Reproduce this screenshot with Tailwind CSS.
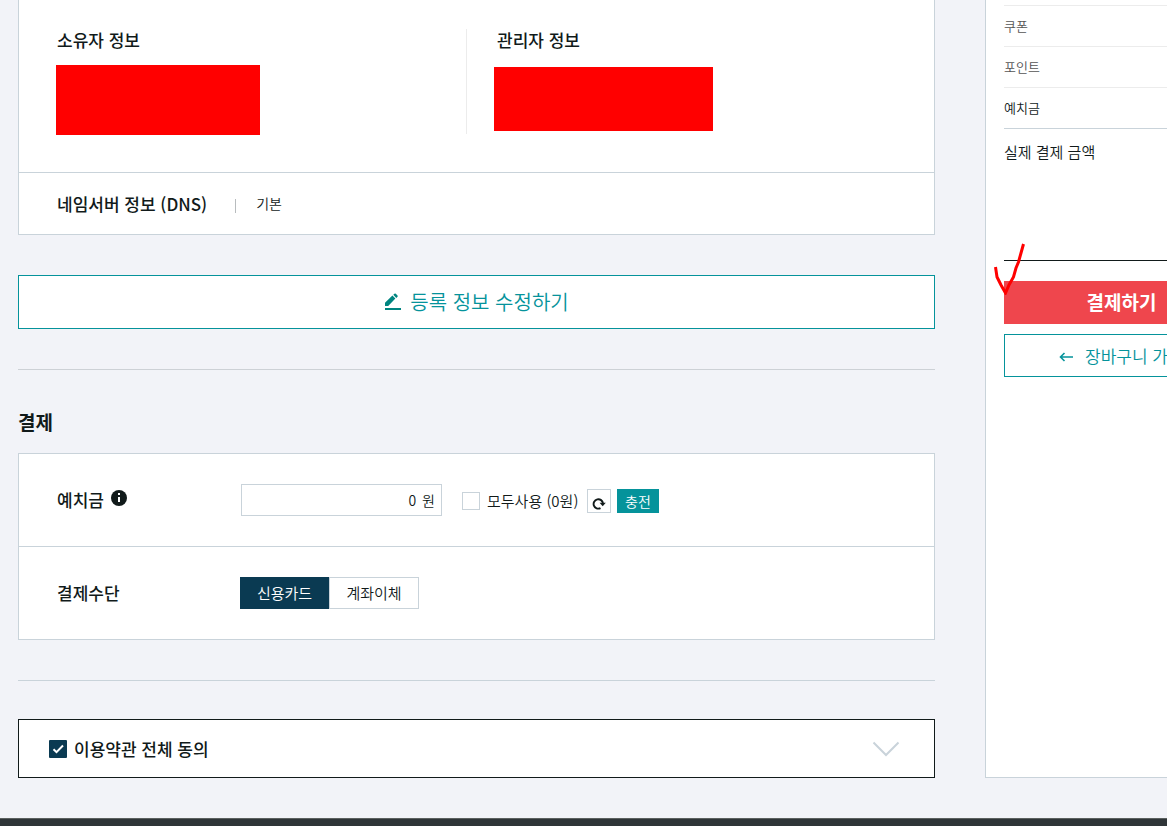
<!DOCTYPE html>
<html lang="ko">
  <head>
    <meta charset="UTF-8" />
    <meta name="viewport" content="width=device-width, initial-scale=1.0" />
    <title>결제</title>
    <script src="https://cdn.jsdelivr.net/npm/@tailwindcss/browser@4"></script>
  </head>

  <body
    class="flex min-h-screen flex-col overflow-x-hidden bg-[#f2f3f8] font-['Noto_Sans_CJK_KR',sans-serif] font-[350] text-[#111a1a]"
  >
    <div class="flex min-w-[1258px] gap-[50px] pb-10 pl-[18px]">
      <main class="flex-1">
        <!-- Registration info -->
        <section class="border-x border-b border-[#c9d3da] bg-white">
          <div class="flex pt-[29px] pb-[38px]">
            <div class="relative h-[105px] w-[447px] pl-[38px]">
              <h3 class="text-[17px] leading-[22px] font-medium">소유자 정보</h3>
              <div class="absolute top-9 left-[37px] h-[70px] w-[204px] bg-[#ff0000]"></div>
            </div>
            <div class="relative h-[105px] flex-1 border-l border-[#ececec] pl-[30px]">
              <h3 class="text-[17px] leading-[22px] font-medium">관리자 정보</h3>
              <div class="absolute top-[38px] left-[27px] h-16 w-[219px] bg-[#ff0000]"></div>
            </div>
          </div>
          <div class="flex h-[62px] items-center border-t border-[#c9d3da] pl-[38px]">
            <h3 class="text-[17px] leading-[22px] font-medium">네임서버 정보 (DNS)</h3>
            <span class="mt-1 ml-7 h-[14px] w-px bg-[#b8bcbe]"></span>
            <span class="ml-5 text-[14px]">기본</span>
          </div>
        </section>

        <button
          type="button"
          class="mt-10 flex h-[54px] w-full items-center justify-center gap-2 border border-[#05939b] bg-white text-[20px] text-[#05939b]"
        >
          <svg class="size-[18px]" viewBox="0 0 18 18" fill="#008580" aria-hidden="true">
            <path d="M1 13V9.800L8.400 2.600l3 3L4.200 13zM9.300 1.800l1.100-1.100q.7-.6 1.400 0l1.700 1.700q.6.7 0 1.400l-1.200 1.100z" />
            <path d="M1 15h16v2H1z" />
          </svg>
          등록 정보 수정하기
        </button>

        <hr class="mt-10 border-[#cdd1d6]" />

        <!-- Payment -->
        <h2 class="mt-[38px] text-[19px] leading-7 font-bold">결제</h2>
        <section class="mt-[17px] border border-[#c9d3da] bg-white">
          <div class="flex h-[92px] items-center pl-[38px]">
            <div class="flex w-[184px] items-center gap-[7px]">
              <label for="deposit" class="text-[17px] font-medium">예치금</label>
              <svg class="mb-1 size-4" viewBox="0 0 16 16" role="img" aria-label="안내">
                <circle cx="8" cy="8" r="8" fill="#111a1a" />
                <path d="M7 3h2v2H7zM7 7h2v5H7z" fill="#fff" />
              </svg>
            </div>
            <div class="flex h-8 w-[201px] items-center justify-end gap-[6px] border border-[#c9d3da] px-[6px] text-[14px]">
              <input id="deposit" type="text" value="0" class="min-w-0 flex-1 text-right outline-none" />
              <span>원</span>
            </div>
            <div class="ml-5 flex items-center pt-[2px]">
              <input
                id="use-all"
                type="checkbox"
                class="size-[18px] appearance-none border border-[#c9d3da] bg-white"
              />
              <label for="use-all" class="ml-[7px] w-[93px] text-[15px] whitespace-nowrap">모두사용 (0원)</label>
              <button
                type="button"
                aria-label="새로고침"
                class="ml-[7px] flex size-6 items-end justify-center border border-[#c9d3da] bg-white pb-[2px]"
              >
                <svg class="h-[13px] w-[14px]" viewBox="0 0 14 13" aria-hidden="true">
                  <path d="M8.500 11.100A4.700 4.700 0 1 1 11 6.500" fill="none" stroke="#111a1a" stroke-width="1.900" />
                  <path d="M7.600 5.700h6.200l-3.100 3.600z" fill="#111a1a" />
                </svg>
              </button>
              <button type="button" class="ml-[6px] h-6 w-[42px] bg-[#05939b] text-[14px] leading-5 text-white">충전</button>
            </div>
          </div>
          <div class="flex h-[93px] items-center border-t border-[#c9d3da] pl-[38px]">
            <h3 class="w-[183px] text-[17px] font-medium">결제수단</h3>
            <div class="flex text-[15px]">
              <button type="button" class="h-8 w-[89px] bg-[#0a3a52] text-white">신용카드</button>
              <button type="button" class="h-8 w-[90px] border border-[#c9d3da] bg-white">계좌이체</button>
            </div>
          </div>
        </section>

        <hr class="mt-10 border-[#c9d3da]" />

        <!-- Terms -->
        <section class="mt-[38px] flex h-[59px] items-center border border-[#111a1a] bg-white pt-px pr-[34px] pl-[30px]">
          <span class="relative size-[18px]">
            <input id="agree" type="checkbox" checked class="block size-[18px] appearance-none rounded-[1px] bg-[#0a3a52]" />
            <svg class="pointer-events-none absolute inset-0 size-[18px]" viewBox="0 0 18 18" aria-hidden="true">
              <path d="M4.500 9.200l3 2.900 6.500-6.600" fill="none" stroke="#fff" stroke-width="2" />
            </svg>
          </span>
          <label for="agree" class="ml-[7px] text-[17px] font-medium">이용약관 전체 동의</label>
          <button type="button" aria-label="약관 펼치기" class="ml-auto">
            <svg class="h-4 w-7" viewBox="0 0 28 16" aria-hidden="true">
              <path d="M1.500 1.500L14 14 26.500 1.500" fill="none" stroke="#c9d3da" stroke-width="2" />
            </svg>
          </button>
        </section>
      </main>

      <!-- Summary -->
      <aside class="w-[273px] border border-t-0 border-[#c9d3da] bg-white px-[18px]">
        <ul class="pt-[5px] text-[13px]">
          <li class="flex h-[41px] items-center border-t border-[#ececec] pb-px text-[#555]">쿠폰</li>
          <li class="flex h-[41px] items-center border-t border-[#ececec] pb-px text-[#555]">포인트</li>
          <li class="flex h-[41px] items-center border-t border-[#ececec] pb-px">예치금</li>
        </ul>
        <div class="h-[133px] border-t border-b border-t-[#c9d3da] border-b-[#111a1a] pt-3 text-[15px]">
          실제 결제 금액
        </div>
        <div class="relative mt-5">
          <button type="button" class="h-[43px] w-full bg-[#ef464d] text-[19px] font-bold text-white">
            결제하기
          </button>
          <svg class="absolute -top-10 -left-[10px] h-[54px] w-[31px]" viewBox="0 0 31 54" aria-hidden="true">
            <path
              d="M1.500 26l1.500 10 4 8 4.500 8 3.500-8 4.500-8 2.500-9 2.500-6 2.500-9 2.500-9"
              fill="none"
              stroke="#ff0000"
              stroke-width="3"
            />
          </svg>
        </div>
        <a
          href="#"
          class="mt-[10px] flex h-[43px] items-center border border-[#05939b] pl-[54px] text-[17px] whitespace-nowrap text-[#05939b]"
        >
          <svg class="mt-[3px] mr-3 h-[10px] w-[14px]" viewBox="0 0 14 10" aria-hidden="true">
            <path d="M14 5H2M5.500 1L1.500 5l4 4" fill="none" stroke="#05939b" stroke-width="1.600" />
          </svg>
          장바구니 가기
        </a>
      </aside>
    </div>

    <footer class="min-h-2 min-w-[1258px] flex-1 border-t border-[#5b605f] bg-[#2f3538]"></footer>
  </body>
</html>
